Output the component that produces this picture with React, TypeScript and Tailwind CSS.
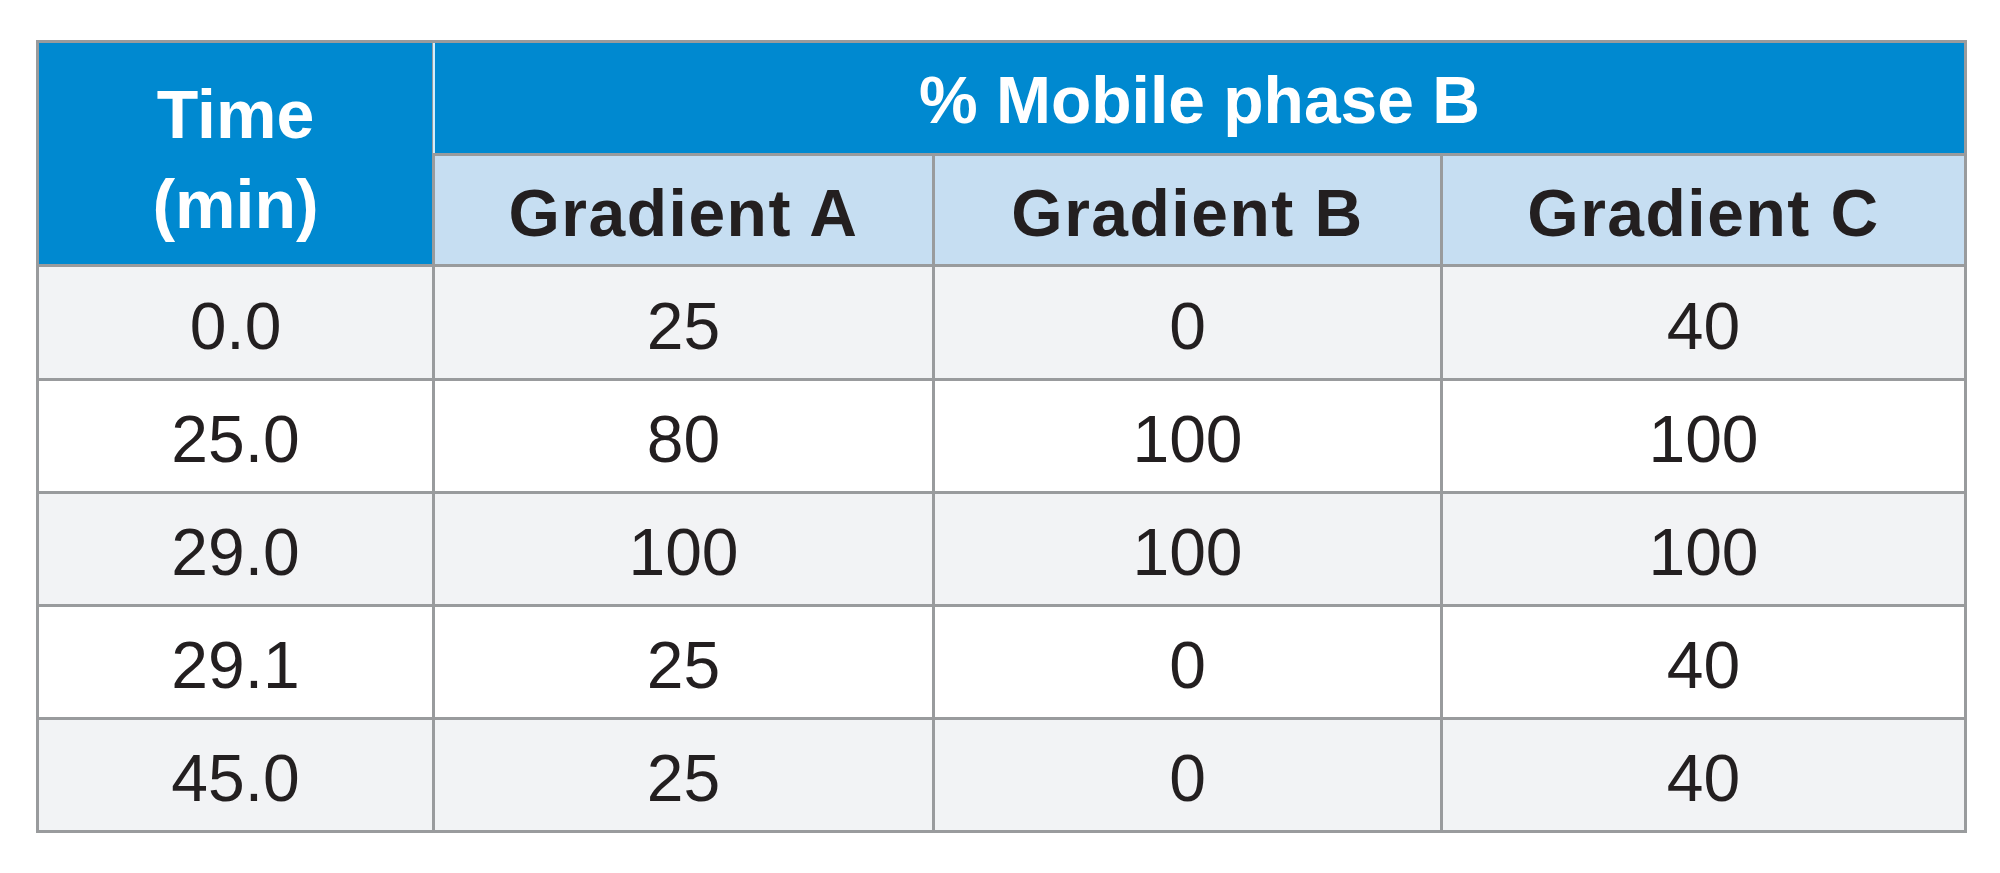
import React from "react";

const rows: string[][] = [
  ["0.0", "25", "0", "40"],
  ["25.0", "80", "100", "100"],
  ["29.0", "100", "100", "100"],
  ["29.1", "25", "0", "40"],
  ["45.0", "25", "0", "40"],
];

export default function App() {
  return (
    <div
      className="w-[2000px] h-[873px] bg-white pt-[40px] pl-[36px]"
      style={{ fontFamily: '"Liberation Sans", Arial, sans-serif' }}
    >
      <div className="inline-grid grid-cols-[393px_497px_505px_521px] grid-rows-[110px_108px_111px_110px_110px_110px_110px] gap-[3px] p-[3px] bg-[#999b9d]">
        <div className="row-span-2 bg-[#0089d0] text-white font-bold text-[68px] leading-[90px] flex flex-col items-center justify-center pt-[10px]">
          <span>Time</span>
          <span>(min)</span>
        </div>
        <div className="col-span-3 bg-[#0089d0] text-white font-bold text-[66px] leading-none flex items-center justify-center shadow-[-2px_0_0_#d2eefb] pt-[4px]">
          % Mobile phase B
        </div>
        {["Gradient A", "Gradient B", "Gradient C"].map((g) => (
          <div
            key={g}
            className="bg-[#c6def2] text-[#231f20] font-bold text-[66px] tracking-[1.5px] leading-none flex items-center justify-center pt-[5px]"
          >
            {g}
          </div>
        ))}
        {rows.map((r, i) =>
          r.map((c, j) => (
            <div
              key={`${i}-${j}`}
              className={`${i % 2 === 0 ? "bg-[#f2f3f5]" : "bg-white"} text-[#231f20] text-[66px] leading-none flex items-center justify-center pt-[6px]`}
            >
              {c}
            </div>
          ))
        )}
      </div>
    </div>
  );
}
